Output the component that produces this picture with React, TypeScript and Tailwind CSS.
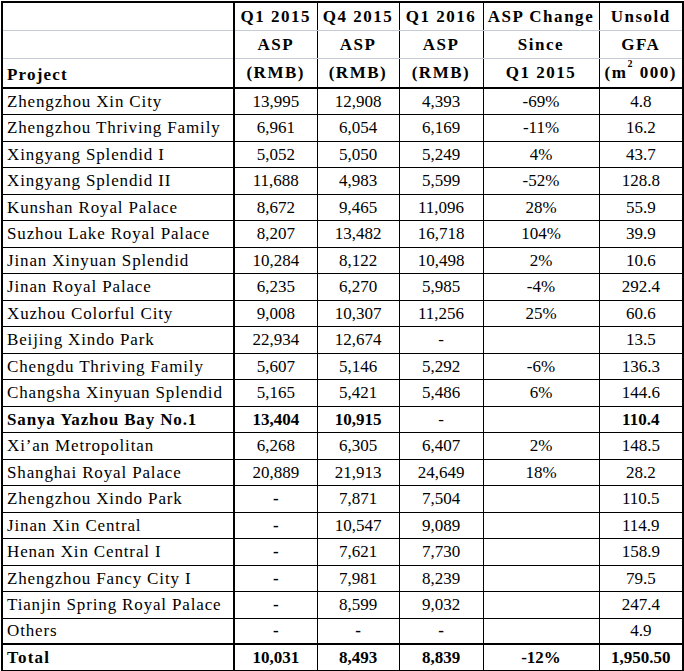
import React from "react";

type Row = {
  name: string;
  q115: string;
  q415: string;
  q116: string;
  chg: string;
  gfa: string;
  bold?: boolean;
  boldDash?: boolean;
};

const rows: Row[] = [
  { name: "Zhengzhou Xin City", q115: "13,995", q415: "12,908", q116: "4,393", chg: "-69%", gfa: "4.8" },
  { name: "Zhengzhou Thriving Family", q115: "6,961", q415: "6,054", q116: "6,169", chg: "-11%", gfa: "16.2" },
  { name: "Xingyang Splendid I", q115: "5,052", q415: "5,050", q116: "5,249", chg: "4%", gfa: "43.7" },
  { name: "Xingyang Splendid II", q115: "11,688", q415: "4,983", q116: "5,599", chg: "-52%", gfa: "128.8" },
  { name: "Kunshan Royal Palace", q115: "8,672", q415: "9,465", q116: "11,096", chg: "28%", gfa: "55.9" },
  { name: "Suzhou Lake Royal Palace", q115: "8,207", q415: "13,482", q116: "16,718", chg: "104%", gfa: "39.9" },
  { name: "Jinan Xinyuan Splendid", q115: "10,284", q415: "8,122", q116: "10,498", chg: "2%", gfa: "10.6" },
  { name: "Jinan Royal Palace", q115: "6,235", q415: "6,270", q116: "5,985", chg: "-4%", gfa: "292.4" },
  { name: "Xuzhou Colorful City", q115: "9,008", q415: "10,307", q116: "11,256", chg: "25%", gfa: "60.6" },
  { name: "Beijing Xindo Park", q115: "22,934", q415: "12,674", q116: "-", chg: "", gfa: "13.5" },
  { name: "Chengdu Thriving Family", q115: "5,607", q415: "5,146", q116: "5,292", chg: "-6%", gfa: "136.3" },
  { name: "Changsha Xinyuan Splendid", q115: "5,165", q415: "5,421", q116: "5,486", chg: "6%", gfa: "144.6" },
  { name: "Sanya Yazhou Bay No.1", q115: "13,404", q415: "10,915", q116: "-", chg: "", gfa: "110.4", bold: true },
  { name: "Xi\u2019an Metropolitan", q115: "6,268", q415: "6,305", q116: "6,407", chg: "2%", gfa: "148.5" },
  { name: "Shanghai Royal Palace", q115: "20,889", q415: "21,913", q116: "24,649", chg: "18%", gfa: "28.2" },
  { name: "Zhengzhou Xindo Park", q115: "-", q415: "7,871", q116: "7,504", chg: "", gfa: "110.5", boldDash: true },
  { name: "Jinan Xin Central", q115: "-", q415: "10,547", q116: "9,089", chg: "", gfa: "114.9", boldDash: true },
  { name: "Henan Xin Central I", q115: "-", q415: "7,621", q116: "7,730", chg: "", gfa: "158.9", boldDash: true },
  { name: "Zhengzhou Fancy City I", q115: "-", q415: "7,981", q116: "8,239", chg: "", gfa: "79.5", boldDash: true },
  { name: "Tianjin Spring Royal Palace", q115: "-", q415: "8,599", q116: "9,032", chg: "", gfa: "247.4", boldDash: true },
  { name: "Others", q115: "-", q415: "-", q116: "-", chg: "", gfa: "4.9", boldDash: true },
];

const total: Row = { name: "Total", q115: "10,031", q415: "8,493", q116: "8,839", chg: "-12%", gfa: "1,950.50", bold: true };

const hdTop = "border-x border-black border-b border-b-[#c5ccd8] text-center font-bold tracking-[0.09em] leading-none align-middle p-0";
const hdLast = "border-x border-black border-b-2 border-b-black text-center font-bold tracking-[0.09em] leading-none align-middle p-0";
const cell = "border border-black text-center px-1 py-0 leading-none align-middle";

export default function App() {
  return (
    <div className="bg-white min-h-screen pt-px pl-px font-['Liberation_Serif',serif] text-[17px] text-black">
      <table className="border-collapse border-2 border-black table-fixed w-[681px]">
        <colgroup>
          <col className="w-[232px]" />
          <col className="w-[83px]" />
          <col className="w-[82px]" />
          <col className="w-[84px]" />
          <col className="w-[116px]" />
          <col className="w-[84px]" />
        </colgroup>
        <thead>
          <tr className="h-[28px]">
            <th className="border-x-2 border-black border-b border-b-[#c5ccd8] p-0"></th>
            <th className={hdTop}>Q1 2015</th>
            <th className={hdTop}>Q4 2015</th>
            <th className={hdTop}>Q1 2016</th>
            <th className={hdTop}>ASP Change</th>
            <th className={hdTop}>Unsold</th>
          </tr>
          <tr className="h-[28px]">
            <th className="border-x-2 border-black border-b border-b-[#c5ccd8] p-0"></th>
            <th className={hdTop}>ASP</th>
            <th className={hdTop}>ASP</th>
            <th className={hdTop}>ASP</th>
            <th className={hdTop}>Since</th>
            <th className={hdTop}>GFA</th>
          </tr>
          <tr className="h-[30px]">
            <th className="border-x-2 border-black border-b-2 border-b-black text-left pl-[4px] pt-[3px] font-bold tracking-[0.07em] leading-none">
              Project
            </th>
            <th className={hdLast}>(RMB)</th>
            <th className={hdLast}>(RMB)</th>
            <th className={hdLast}>(RMB)</th>
            <th className={hdLast}>Q1 2015</th>
            <th className={hdLast}>
              (m<sup className="text-[10px] align-[6px]">2</sup> 000)
            </th>
          </tr>
        </thead>
        <tbody>
          {rows.map((r, i) => (
            <tr key={r.name} className={i % 2 === 1 ? "h-[27px]" : "h-[26px]"}>
              <td className={`border border-black border-r-2 pl-[4px] py-0 leading-none whitespace-nowrap tracking-[0.05em] ${r.bold ? "font-bold" : ""}`}>
                {r.name}
              </td>
              <td className={`${cell} ${r.bold || r.boldDash ? "font-bold" : ""}`}>{r.q115}</td>
              <td className={`${cell} ${r.bold ? "font-bold" : ""} ${r.boldDash && r.q415 === "-" ? "font-bold" : ""}`}>{r.q415}</td>
              <td className={`${cell} ${r.boldDash && r.q116 === "-" ? "font-bold" : ""}`}>{r.q116}</td>
              <td className={cell}>{r.chg}</td>
              <td className={`${cell} ${r.bold ? "font-bold" : ""}`}>{r.gfa}</td>
            </tr>
          ))}
          <tr className="h-[27px]">
            <td className="border-t-2 border-black border-r-2 pl-[4px] py-0 leading-none font-bold tracking-[0.07em]">{total.name}</td>
            <td className={`${cell} border-t-2 font-bold`}>{total.q115}</td>
            <td className={`${cell} border-t-2 font-bold`}>{total.q415}</td>
            <td className={`${cell} border-t-2 font-bold`}>{total.q116}</td>
            <td className={`${cell} border-t-2 font-bold`}>{total.chg}</td>
            <td className={`${cell} border-t-2 font-bold`}>{total.gfa}</td>
          </tr>
        </tbody>
      </table>
    </div>
  );
}
